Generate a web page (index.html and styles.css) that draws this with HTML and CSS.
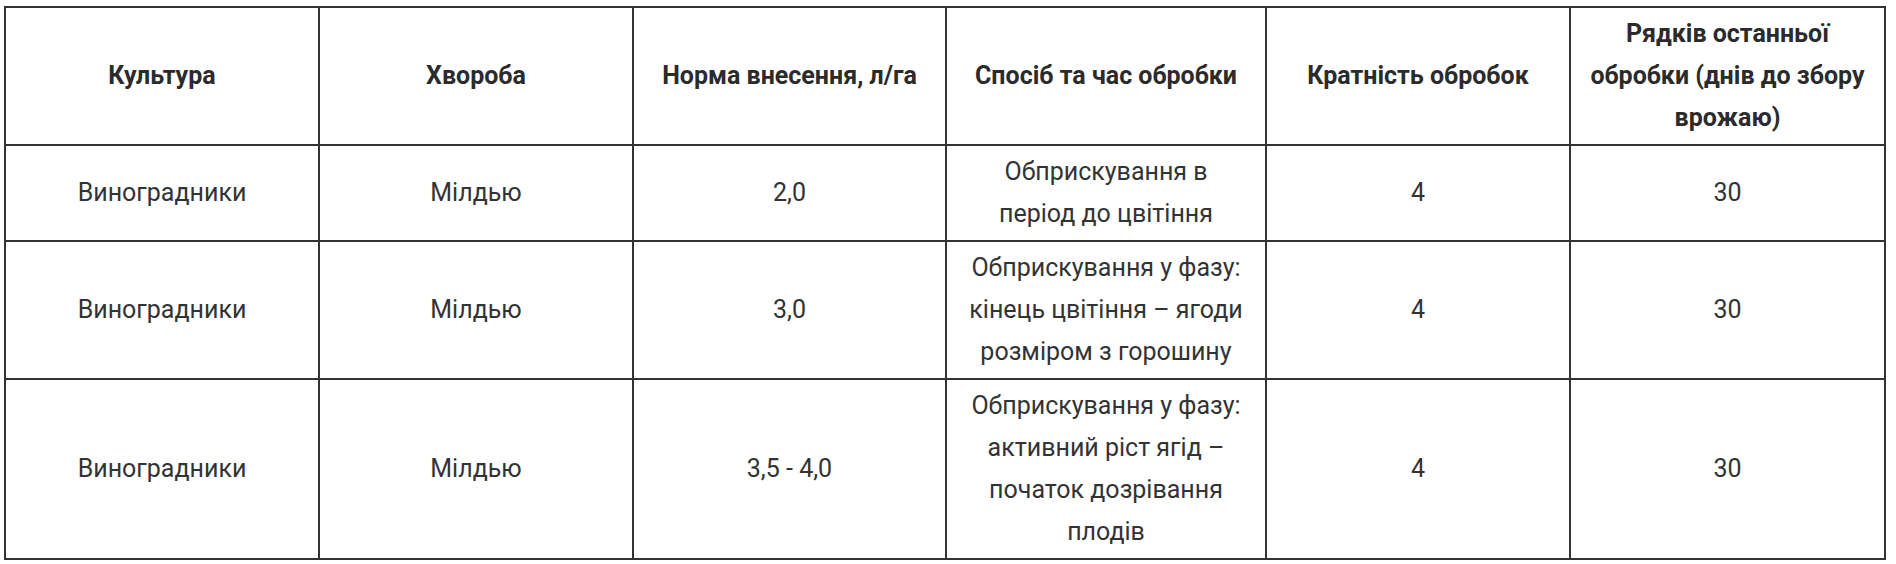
FILE: index.html
```html
<!DOCTYPE html>
<html lang="uk">
<head>
<meta charset="utf-8">
<title>Таблиця</title>
<link rel="stylesheet" href="styles.css">
</head>
<body>
<div class="wrap">
<table class="reg">
  <colgroup>
    <col class="c1"><col class="c2"><col class="c3"><col class="c4"><col class="c5"><col class="c6">
  </colgroup>
  <thead>
    <tr>
      <th>Культура</th>
      <th>Хвороба</th>
      <th>Норма внесення, л/га</th>
      <th>Спосіб та час обробки</th>
      <th>Кратність обробок</th>
      <th>Рядків останньої<br>обробки (днів до збору<br>врожаю)</th>
    </tr>
  </thead>
  <tbody>
    <tr>
      <td>Виноградники</td>
      <td>Мілдью</td>
      <td>2,0</td>
      <td>Обприскування в<br>період до цвітіння</td>
      <td>4</td>
      <td>30</td>
    </tr>
    <tr>
      <td>Виноградники</td>
      <td>Мілдью</td>
      <td>3,0</td>
      <td>Обприскування у фазу:<br>кінець цвітіння – ягоди<br>розміром з горошину</td>
      <td>4</td>
      <td>30</td>
    </tr>
    <tr>
      <td>Виноградники</td>
      <td>Мілдью</td>
      <td>3,5 - 4,0</td>
      <td>Обприскування у фазу:<br>активний ріст ягід –<br>початок дозрівання<br>плодів</td>
      <td>4</td>
      <td>30</td>
    </tr>
  </tbody>
</table>
</div>
</body>
</html>
```

FILE: styles.css
```css
html, body {
  margin: 0;
  padding: 0;
  background: #ffffff;
}

.wrap {
  padding: 6px 0 0 4px;
}

.reg {
  border-collapse: collapse;
  table-layout: fixed;
  width: 1880px;
  font-family: Roboto, "Noto Sans", sans-serif;
  font-size: 25px;
  line-height: 42px;
  color: #333333;
}

.c1 { width: 314px; }
.c2 { width: 314px; }
.c3 { width: 313px; }
.c4 { width: 320px; }
.c5 { width: 304px; }
.c6 { width: 315px; }

.reg th,
.reg td {
  border: 2px solid #333333;
  padding: 5px 8px;
  text-align: center;
  vertical-align: middle;
  white-space: nowrap;
}

.reg th {
  font-weight: 700;
  color: #2b2b2b;
}

.reg td {
  font-weight: 400;
}
```
